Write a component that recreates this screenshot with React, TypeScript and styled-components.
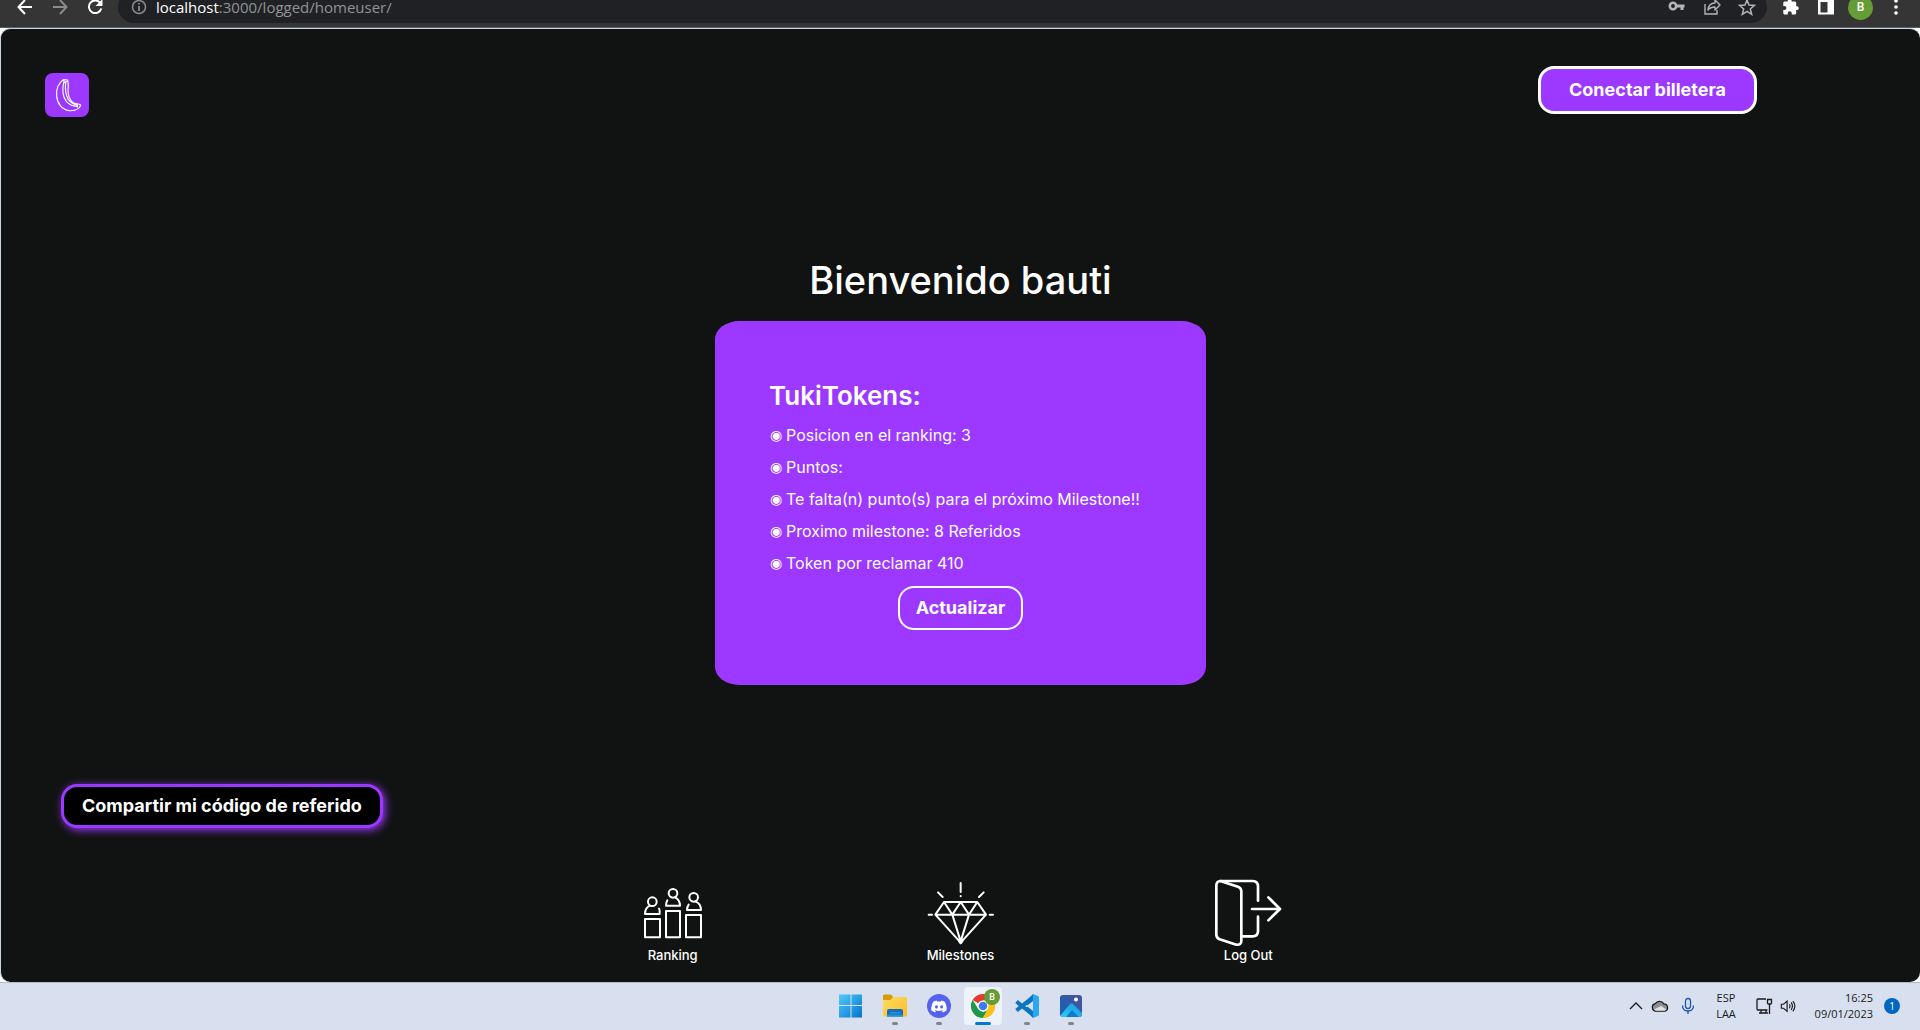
import React from "react";
import styled, { createGlobalStyle, css } from "styled-components";

const colors = {
  ink: "#111312",
  purple: "#9c38ff",
  frame: "#353535",
  pill: "#202124",
  taskbar: "#d8dfee",
};

const brandFont = `Inter, "Noto Sans", "Liberation Sans", sans-serif`;
const systemFont = `"Open Sans", "Noto Sans", "Liberation Sans", sans-serif`;

const GlobalStyle = createGlobalStyle`
  *, *::before, *::after { box-sizing: border-box; }
  body { margin: 0; background: #fff; font-family: ${brandFont}; }
  h1, h2, ul { margin: 0; padding: 0; }
  button { font: inherit; color: inherit; cursor: pointer; }
`;

const Screen = styled.div`
  display: flex;
  flex-direction: column;
  min-height: 100vh;
`;

/* ---------- Browser toolbar ---------- */

const Toolbar = styled.header`
  display: flex;
  align-items: flex-end;
  height: 28px;
  padding: 0 7px;
  overflow: hidden;
  background: ${colors.frame};
  border-bottom: 1px solid #5b5d60;
  font-family: ${systemFont};
`;

const ToolButton = styled.button<{ $dim?: boolean }>`
  display: flex;
  flex: none;
  align-items: center;
  justify-content: center;
  width: 35px;
  height: 32px;
  padding: 0;
  border: 0;
  background: none;
  color: ${(p) => (p.$dim ? "#8a8b8d" : "#fff")};
`;

const ToolGroup = styled.div`
  display: flex;
  margin-bottom: 4px;
`;

const AddressBar = styled.div`
  display: flex;
  flex: 1;
  align-items: center;
  height: 32px;
  margin: 0 6px 4px;
  padding: 0 3px;
  border-radius: 16px;
  background: ${colors.pill};
`;

const Address = styled.div`
  flex: 1;
  color: #919397;
  font-size: 15px;
  line-height: 20px;
  outline: none;
`;

const Host = styled.span`
  color: #fff;
`;

const Avatar = styled.span`
  display: flex;
  align-items: center;
  justify-content: center;
  width: 25px;
  height: 25px;
  border-radius: 50%;
  background: #659c35;
  color: #fff;
  font: 500 12px/16px Roboto, sans-serif;
`;

/* ---------- Web page ---------- */

const Page = styled.main`
  display: flex;
  flex: 1;
  flex-direction: column;
  border: solid #c9d6e4;
  border-width: 1px 0 0 1px;
  border-radius: 10px;
  background: ${colors.ink};
  color: #fff;
`;

const PageHeader = styled.div`
  display: flex;
  align-items: flex-start;
  justify-content: space-between;
  padding: 37px 163px 0 44px;
`;

const Logo = styled.a`
  display: block;
  padding-top: 7px;

  svg {
    display: block;
    border-radius: 8px;
    background: ${colors.purple};
  }
`;

const PillButton = styled.button<{ $kind: "wallet" | "share" | "refresh" }>`
  border: 3px solid #fff;
  border-radius: 16px;
  background: ${colors.purple};
  color: #fff;
  font-size: 18px;
  font-weight: 700;
  line-height: 24px;

  ${(p) =>
    p.$kind === "wallet" &&
    css`
      padding: 9px 28px;
    `}
  ${(p) =>
    p.$kind === "share" &&
    css`
      padding: 7px 18px;
      border-color: ${colors.purple};
      background: #000;
      box-shadow: 2px 2px 8px ${colors.purple};
    `}
  ${(p) =>
    p.$kind === "refresh" &&
    css`
      padding: 8px 16px;
      border-width: 2px;
    `}
`;

const Welcome = styled.section`
  display: flex;
  flex-direction: column;
  align-items: center;
  margin-top: 139px;
`;

const Title = styled.h1`
  margin-bottom: 17px;
  font-size: 38px;
  font-weight: 500;
  line-height: 48px;
`;

const Card = styled.article`
  display: flex;
  flex-direction: column;
  width: 100%;
  max-width: 491px;
  padding: 55px 54px;
  border-radius: 5%;
  background: ${colors.purple};

  ${PillButton} {
    align-self: center;
    margin-top: 7px;
  }
`;

const CardTitle = styled.h2`
  margin-bottom: 3px;
  font-size: 26px;
  font-weight: 600;
  line-height: 40px;
`;

const Stats = styled.ul`
  list-style: none;
`;

const Stat = styled.li`
  display: flex;
  font-size: 16px;
  line-height: 32px;
  white-space: nowrap;
`;

const Bullet = styled.span`
  width: 17px;
  padding-left: 1px;
  font-family: "DejaVu Sans", sans-serif;
  font-size: 14px;
`;

const ShareRow = styled.div`
  padding: 99px 60px 0;
`;

const Nav = styled.nav`
  display: grid;
  grid-template-columns: repeat(3, 1fr);
  align-self: center;
  width: 45%;
  margin-top: auto;
  padding: 50px 0 19px;
`;

const NavLink = styled.a`
  display: flex;
  flex-direction: column;
  align-items: center;
  color: #fff;
  font-size: 13px;
  font-weight: 500;
  line-height: 16px;
  text-decoration: none;
`;

/* ---------- Taskbar ---------- */

const Taskbar = styled.footer`
  display: grid;
  grid-template-columns: 1fr auto 1fr;
  align-items: center;
  height: 48px;
  padding-bottom: 2px;
  border-top: 1px solid #b4b9c4;
  background: ${colors.taskbar};
  color: #1b1b1b;
  font-family: ${systemFont};
`;

const Apps = styled.div`
  display: flex;
  grid-column: 2;
  gap: 6px;
  padding-left: 2px;
`;

const AppButton = styled.button<{ $state?: "open" | "active" }>`
  position: relative;
  display: flex;
  align-items: center;
  justify-content: center;
  width: 38px;
  height: 38px;
  padding: 0;
  border: 0;
  border-radius: 4px;
  background: ${(p) => (p.$state === "active" ? "#eef2f9" : "none")};

  &::after {
    content: ${(p) => (p.$state ? '""' : "none")};
    position: absolute;
    bottom: 0;
    width: ${(p) => (p.$state === "active" ? "16px" : "6px")};
    height: 3px;
    border-radius: 2px;
    background: ${(p) => (p.$state === "active" ? "#0078d4" : "#7e838c")};
  }
`;

const AppBadge = styled.span`
  position: absolute;
  top: 2px;
  right: 2px;
  width: 16px;
  height: 16px;
  border-radius: 50%;
  background: #659c35;
  color: #fff;
  font: 500 9px/16px Roboto, sans-serif;
`;

const Tray = styled.div`
  display: flex;
  grid-column: 3;
  align-items: center;
  justify-content: flex-end;
  padding-right: 20px;
`;

const TrayButton = styled.button<{ $width: number }>`
  display: flex;
  align-items: center;
  justify-content: center;
  width: ${(p) => p.$width}px;
  padding: 0;
  border: 0;
  background: none;
  font-size: 11px;
  line-height: 16px;
`;

const Clock = styled(TrayButton)`
  justify-content: flex-end;
  margin-right: 11px;
  text-align: right;
`;

const Notice = styled.button`
  width: 16px;
  height: 16px;
  padding: 0;
  border: 0;
  border-radius: 50%;
  background: #0067c0;
  color: #fff;
  font-size: 10px;
  line-height: 16px;
`;

/* ---------- Drawings ---------- */

const BananaIcon = () => (
  <svg width="44" height="44" viewBox="135 219 132 132" fill="none" stroke="#fff" strokeWidth="3.5" strokeLinejoin="round" strokeLinecap="round">
    <path d="M190 239C174 250 168 270 170 289c2 22 16 40 38 43 14 1 24-4 31-10l3-7-7-3c-12 0-22-7-27-19-6-14-4-27-3-39l-2-14z" />
    <path d="M191 248c-5 22-1 44 8 56 8 9 18 14 32 15M197 246c-2 20 0 40 8 52 6 8 14 14 26 17M190 239l3 8 10-3M231 312l2 9" />
  </svg>
);

const RankingIcon = () => (
  <svg width="68" height="68" viewBox="57 27 204 204" fill="none" stroke="#fff" strokeWidth="6" strokeLinejoin="round" strokeLinecap="round">
    <circle cx="97" cy="95" r="13" />
    <circle cx="159" cy="70" r="13" />
    <circle cx="221" cy="82" r="13" />
    <path d="M90 107c-10 4-15 12-15 25h44v-8c0-4-1-6-2-8" />
    <path d="M142 91c-3 4-4 8-4 16h42c0-13-5-20-15-25" />
    <path d="M206 104c-3 4-5 9-5 16h42c0-13-5-21-16-25" />
    <path d="M75 147h45v55H75zM138 123h42v79h-42zM198 135h45v67h-45z" />
  </svg>
);

const DiamondIcon = () => (
  <svg width="68" height="68" viewBox="919 27 204 204" fill="none" stroke="#fff" strokeWidth="6" strokeLinejoin="round" strokeLinecap="round">
    <path d="M973 96h100l26 38-76 84-76-84zM947 134h152M973 96l25 38 25-38 25 38 25-38M998 134l25 80 25-80" />
    <path d="M1023 39v27M1023 78v1M955 67l14 14M1092 67l-14 14M927 134h10M1110 134h10M1018 214l5 6 5-6" />
  </svg>
);

const LogOutIcon = () => (
  <svg width="68" height="68" viewBox="102 57 204 204" fill="none" stroke="#fff" strokeWidth="8" strokeLinejoin="round" strokeLinecap="round">
    <path d="M121 63h97q16 1 16 16v43M234 170v44q-1 15-16 15h-30" />
    <path d="M121 63q-12 1-12 14v148q1 9 10 13l50 16q15 2 15-12V94q0-10-10-14z" />
    <path d="M216 147h83M265 112l35 35-35 34" />
  </svg>
);

const toolIcon = { width: 18, height: 18, viewBox: "0 0 18 18", fill: "none", stroke: "currentColor", strokeWidth: 2 };

const BackIcon = () => (
  <svg {...toolIcon}><path d="M16 9H3M9 2 2.500 9 9 16" /></svg>
);
const ForwardIcon = () => (
  <svg {...toolIcon}><path d="M2 9h13M9 2l6.500 7L9 16" /></svg>
);
const ReloadIcon = () => (
  <svg {...toolIcon}><path d="M14.300 5A6.300 6.300 0 1 0 15.300 10.500" /><path d="M16.500 1v7h-7z" fill="currentColor" stroke="none" /></svg>
);
const InfoIcon = () => (
  <svg {...toolIcon} strokeWidth="1.500"><circle cx="9" cy="9" r="6.500" /><path d="M9 8v5M9 5v1.600" strokeWidth="1.800" /></svg>
);
const KeyIcon = () => (
  <svg {...toolIcon} stroke="#b4b5b7" strokeWidth="2.500"><circle cx="5" cy="8" r="3.200" /><path d="M8 8h8.500M14 8v4" strokeWidth="3" /></svg>
);
const ShareIcon = () => (
  <svg {...toolIcon} stroke="#b4b5b7" strokeWidth="1.400">
    <path d="M2 6v10h12v-4" />
    <path d="M5 12c.5-5 3-7 7-7V2l5 5-5 5V9c-3 0-5 .5-7 3z" strokeLinejoin="round" />
  </svg>
);
const StarIcon = () => (
  <svg {...toolIcon} stroke="#b4b5b7" strokeWidth="1.500"><path d="m9 2 2 5 5.500.400-4.200 3.600 1.400 5.300L9 13.400l-4.700 2.900 1.400-5.300L1.500 7.400 7 7z" /></svg>
);
const PuzzleIcon = () => (
  <svg {...toolIcon} fill="currentColor" stroke="none">
    <path d="M15.300 8.300h-1.100V5.100c0-.8-.7-1.500-1.500-1.500H9.600V2.500a1.900 1.900 0 0 0-3.800 0v1.100h-3C2 3.600 1.300 4.300 1.300 5.100V8h1.100a2 2 0 0 1 0 4.100H1.300V15c0 .8.7 1.500 1.500 1.500h2.900v-1.100a2 2 0 0 1 4.100 0v1.100h2.900c.8 0 1.500-.7 1.500-1.500v-3h1.100a1.900 1.900 0 0 0 0-3.700z" />
  </svg>
);
const PanelIcon = () => (
  <svg {...toolIcon}><path d="M1 1.500h16v15H1z" fill="currentColor" stroke="none" /><path d="M3.500 4h7v10.500h-7z" fill="#353535" stroke="none" /></svg>
);
const DotsIcon = () => (
  <svg {...toolIcon} fill="currentColor" stroke="none"><circle cx="9" cy="3" r="1.800" /><circle cx="9" cy="9" r="1.800" /><circle cx="9" cy="15" r="1.800" /></svg>
);

const WindowsIcon = () => (
  <svg width="24" height="24" viewBox="0 0 24 24">
    <defs><linearGradient id="win" x1="0" y1="0" x2="1" y2="1"><stop offset="0" stopColor="#4fcbfb" /><stop offset="1" stopColor="#0573cf" /></linearGradient></defs>
    <path fill="url(#win)" d="M0 .5h11.500V11H0zM12.500.5H23V11H12.500zM0 12h11.500v11.500H0zM12.500 12H23v11.500H12.500z" />
  </svg>
);
const FolderIcon = () => (
  <svg width="24" height="24" viewBox="0 0 24 24">
    <defs><linearGradient id="fold" x1="0" y1="0" x2="1" y2="1"><stop offset="0" stopColor="#ffdc63" /><stop offset="1" stopColor="#fbbc24" /></linearGradient></defs>
    <path fill="#d99a0a" d="M0 2q0-1.500 1.500-1.500H8l2 2V8H0z" />
    <path fill="url(#fold)" d="M0 6h7.500L10 3h13q1 0 1 1v17.500q0 1-1 1H1q-1 0-1-1z" />
    <path fill="#1571bd" d="M4 22.500V17q0-2 2-2h12q2 0 2 2v5.500z" />
    <path fill="#2592dd" d="M7 18h10v1.500H7zM4 20.500h16v2H4z" />
  </svg>
);
const DiscordIcon = () => (
  <svg width="24" height="24" viewBox="0 0 24 24">
    <circle cx="12" cy="12" r="12" fill="#5562f0" />
    <path fill="#fff" d="M17.600 7.600a12 12 0 0 0-3.200-1l-.5 1a11 11 0 0 0-3.700 0l-.6-1a12 12 0 0 0-3.100 1C4.500 10.700 4 13.700 4.300 16.600A13 13 0 0 0 8.100 18.400l.9-1.500-1.300-.6.3-.3c2.600 1.200 5.500 1.200 8 0l.4.3-1.400.6.9 1.500c1.300-.4 2.600-1 3.700-1.800.4-3.400-.5-6.400-2-9zM9.400 14.400c-.8 0-1.400-.7-1.400-1.500s.6-1.600 1.400-1.600 1.500.7 1.500 1.600c0 .8-.6 1.500-1.500 1.500zm5.200 0c-.8 0-1.400-.7-1.400-1.500s.6-1.600 1.400-1.600c.9 0 1.500.7 1.500 1.600 0 .8-.7 1.500-1.500 1.500z" />
  </svg>
);
const ChromeIcon = () => (
  <svg width="24" height="24" viewBox="0 0 24 24">
    <path fill="#e33b2e" d="M12 12 1.600 6A12 12 0 0 1 22.400 6L12 6.500z" />
    <path fill="#fbc116" d="M22.400 6A12 12 0 0 1 12 24l5-9-1-9z" />
    <path fill="#1f9648" d="M12 24A12 12 0 0 1 1.600 6l5.600 9L12 18l4.500-2z" />
    <path fill="#fbc116" d="M12 6.500h10.600A12 12 0 0 1 12 24l4.800-9.200z" />
    <circle cx="12" cy="12" r="5.500" fill="#fff" />
    <circle cx="12" cy="12" r="4.300" fill="#3b7ded" />
  </svg>
);
const CodeIcon = () => (
  <svg width="24" height="24" viewBox="0 0 24 24">
    <path d="M1.500 7.500 19 21.500M1.500 16.500 19 2.500" stroke="#0b76bd" strokeWidth="4" />
    <path fill="#0b76bd" d="m18 0 1 7-6 5 6 5-1 7-8-8.500 3-3.500-3-3.500z" />
    <path fill="#2ba7f0" d="m18 0 5 2q1 .5 1 1.500v17q0 1-1 1.500l-5 2z" />
    <path fill="#d8dfee" d="m18 7-6.200 5 6.200 5z" />
  </svg>
);
const PhotosIcon = () => (
  <svg width="24" height="24" viewBox="0 0 24 24">
    <defs>
      <linearGradient id="sky" x1="0" y1="1" x2="1" y2="0"><stop offset="0" stopColor="#0f63b9" /><stop offset="1" stopColor="#50519b" /></linearGradient>
      <linearGradient id="hill" x1="0" y1="1" x2="1" y2="0"><stop offset="0" stopColor="#2fd0f2" /><stop offset="1" stopColor="#1c91e0" /></linearGradient>
    </defs>
    <rect x="1" y="1" width="22" height="22" rx="3" fill="url(#sky)" />
    <path fill="url(#hill)" d="M1.500 21.500 11 10q1.500-1.500 3 0l9 9v1q0 3-3 3H4q-2 0-2.500-1.500z" />
    <path fill="#0d7bd0" d="m7 23 6-7 7 7z" />
    <circle cx="17" cy="5.500" r="2" fill="#fff" />
  </svg>
);

const trayIcon = { height: 18, viewBox: "0 0 18 18", width: 18, fill: "none", stroke: "currentColor", strokeWidth: 1.3 };

const ChevronIcon = () => (
  <svg {...trayIcon}><path d="m3 12 6-6 6 6" /></svg>
);
const CloudIcon = () => (
  <svg {...trayIcon}>
    <path fill="#8d8f92" d="M5 14.200a3.800 3.800 0 0 1-.7-7.500 5 5 0 0 1 8.500.2 3.700 3.700 0 0 1 .9 7.300z" />
    <path fill="#dfe2e7" stroke="none" d="M3 12.500 10 9l5.500 3.500-2 1.200H5z" />
  </svg>
);
const MicIcon = () => (
  <svg {...trayIcon} stroke="#1d55a8"><rect x="6.500" y="1.500" width="5" height="10" rx="2.500" /><path d="M3.500 8.500c0 3.500 2 5.500 5.500 5.500s5.500-2 5.500-5.500M9 14v3" /></svg>
);
const NetworkIcon = () => (
  <svg {...trayIcon}><path d="M11 2H3q-1 0-1 1v9q0 1 1 1h9.500M6 13v3M11 13v3M4 16h9M12.500 2.500h4V6q0 1-1 1h-2q-1 0-1-1zM14.500 7v10" /></svg>
);
const SpeakerIcon = () => (
  <svg {...trayIcon}><path d="M1.500 7v4.500H4L8 15V3.500L4 7zM10.500 7q1.500 2 0 4.500M12.500 5q3 4 0 8.500M14.500 3.500q4.500 5.500 0 11.500" /></svg>
);

/* ---------- Data ---------- */

const stats = [
  "Posicion en el ranking: 3",
  "Puntos:",
  "Te falta(n) punto(s) para el próximo Milestone!!",
  "Proximo milestone: 8 Referidos",
  "Token por reclamar 410",
];

const links = [
  { label: "Ranking", href: "#ranking", Icon: RankingIcon },
  { label: "Milestones", href: "#milestones", Icon: DiamondIcon },
  { label: "Log Out", href: "#logout", Icon: LogOutIcon },
];

export default function App() {
  return (
    <Screen>
      <GlobalStyle />
      <Toolbar>
        <ToolGroup>
          <ToolButton aria-label="Back"><BackIcon /></ToolButton>
          <ToolButton aria-label="Forward" $dim><ForwardIcon /></ToolButton>
          <ToolButton aria-label="Reload"><ReloadIcon /></ToolButton>
        </ToolGroup>
        <AddressBar>
          <ToolButton aria-label="Site information" $dim><InfoIcon /></ToolButton>
          <Address role="textbox" tabIndex={0} aria-label="Address">
            <Host>localhost</Host>:3000/logged/homeuser/
          </Address>
          <ToolButton aria-label="Passwords"><KeyIcon /></ToolButton>
          <ToolButton aria-label="Share page"><ShareIcon /></ToolButton>
          <ToolButton aria-label="Bookmark"><StarIcon /></ToolButton>
        </AddressBar>
        <ToolGroup>
          <ToolButton aria-label="Extensions"><PuzzleIcon /></ToolButton>
          <ToolButton aria-label="Side panel"><PanelIcon /></ToolButton>
          <ToolButton aria-label="Profile"><Avatar>B</Avatar></ToolButton>
          <ToolButton aria-label="Menu"><DotsIcon /></ToolButton>
        </ToolGroup>
      </Toolbar>

      <Page>
        <PageHeader>
          <Logo href="#home" aria-label="Home"><BananaIcon /></Logo>
          <PillButton $kind="wallet">Conectar billetera</PillButton>
        </PageHeader>

        <Welcome>
          <Title>Bienvenido bauti</Title>
          <Card>
            <CardTitle>TukiTokens:</CardTitle>
            <Stats>
              {stats.map((text) => (
                <Stat key={text}><Bullet>◉</Bullet>{text}</Stat>
              ))}
            </Stats>
            <PillButton $kind="refresh">Actualizar</PillButton>
          </Card>
        </Welcome>

        <ShareRow>
          <PillButton $kind="share">Compartir mi código de referido</PillButton>
        </ShareRow>

        <Nav>
          {links.map(({ label, href, Icon }) => (
            <NavLink key={label} href={href}><Icon />{label}</NavLink>
          ))}
        </Nav>
      </Page>

      <Taskbar>
        <Apps>
          <AppButton aria-label="Start"><WindowsIcon /></AppButton>
          <AppButton aria-label="Explorer" $state="open"><FolderIcon /></AppButton>
          <AppButton aria-label="Discord" $state="open"><DiscordIcon /></AppButton>
          <AppButton aria-label="Chrome" $state="active"><ChromeIcon /><AppBadge>B</AppBadge></AppButton>
          <AppButton aria-label="Code" $state="open"><CodeIcon /></AppButton>
          <AppButton aria-label="Photos" $state="open"><PhotosIcon /></AppButton>
        </Apps>
        <Tray>
          <TrayButton aria-label="Hidden icons" $width={24}><ChevronIcon /></TrayButton>
          <TrayButton aria-label="Cloud" $width={24}><CloudIcon /></TrayButton>
          <TrayButton aria-label="Microphone" $width={32}><MicIcon /></TrayButton>
          <TrayButton $width={44}>ESP<br />LAA</TrayButton>
          <TrayButton aria-label="Network" $width={32}><NetworkIcon /></TrayButton>
          <TrayButton aria-label="Volume" $width={16}><SpeakerIcon /></TrayButton>
          <Clock $width={77}>16:25<br />09/01/2023</Clock>
          <Notice>1</Notice>
        </Tray>
      </Taskbar>
    </Screen>
  );
}
